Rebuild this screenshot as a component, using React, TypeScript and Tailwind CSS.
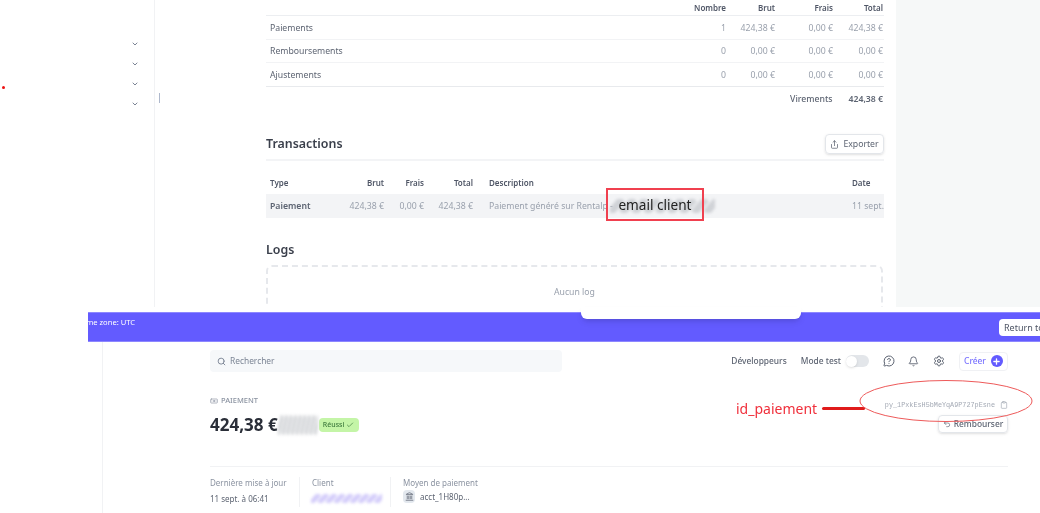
import { Banknote, Check, ChevronDown, Clipboard, Landmark, Plus, Search, Settings, Bell, MessageCircleQuestion, Undo2, Share } from "lucide-react"

const summary = [
  { label: "Paiements", count: "1", gross: "424,38 €", fees: "0,00 €", total: "424,38 €" },
  { label: "Remboursements", count: "0", gross: "0,00 €", fees: "0,00 €", total: "0,00 €" },
  { label: "Ajustements", count: "0", gross: "0,00 €", fees: "0,00 €", total: "0,00 €" },
]

function Smear({ color, width, height }: { color: string; width: number; height: number }) {
  return (
    <svg width={width} height={height} viewBox="0 0 70 10" preserveAspectRatio="none" className="blur-[1.5px]">
      {[0, 8, 16, 24, 32, 40, 48, 56, 64].map((x) => (
        <path key={x} d={`M${x} 10L${x + 8} 0`} stroke={color} strokeWidth="5" />
      ))}
    </svg>
  )
}

function TopStatement() {
  return (
    <div className="flex h-[307px] overflow-hidden bg-white">
      <div className="w-[155px] shrink-0 border-r border-[#f1f2f4] pt-[35px] pr-[15px] flex flex-col items-end gap-[1.5px] text-[#7b8494]">
        <ChevronDown size={8} className="my-[5.2px]" strokeWidth={3} />
        <ChevronDown size={8} className="my-[5.2px]" strokeWidth={3} />
        <ChevronDown size={8} className="my-[5.2px]" strokeWidth={3} />
        <ChevronDown size={8} className="my-[5.2px]" strokeWidth={3} />
      </div>
      <div className="flex-1 pl-[111px] pr-[12px] text-[8.7px]">
        <div className="grid grid-cols-[1fr_49px_58px_50px] h-[16px] items-center pl-1 pr-px border-b border-[#eceef1] font-semibold text-[#4f5666] text-right text-[8px]">
          <span>Nombre</span>
          <span>Brut</span>
          <span>Frais</span>
          <span>Total</span>
        </div>
        {summary.map((row) => (
          <div key={row.label} className="grid grid-cols-[1fr_49px_58px_50px] h-[23.5px] items-center pl-1 pr-px pt-[2px] border-b border-[#f2f3f5] text-[#9aa1ad] text-right">
            <div className="flex justify-between">
              <span className="text-[#5d6472]">{row.label}</span>
              <span>{row.count}</span>
            </div>
            <span>{row.gross}</span>
            <span>{row.fees}</span>
            <span>{row.total}</span>
          </div>
        ))}
        <div className="flex justify-end gap-[16px] h-[26px] items-center pr-px pt-[2px] border-t border-[#e8eaed] -mt-px font-semibold text-[#5d6472]">
          <span className="font-medium">Virements</span>
          <span>424,38 €</span>
        </div>
        <div className="flex items-center justify-between mt-[18px] h-[31.5px] border-b-2 border-[#f3f4f6]">
          <h2 className="text-[12.4px] font-semibold text-[#3a3f4b]">Transactions</h2>
          <button className="flex items-center gap-1 h-[20px] w-[59px] justify-center rounded border border-[#e3e6ea] shadow-sm text-[#5d6472]">
            <Share size={9} />
            Exporter
          </button>
        </div>
        <div className="grid grid-cols-[86px_28px_40px_49px_1fr_32px] h-[33px] items-end pb-[5px] pl-1 font-semibold text-[#4f5666] text-[8px]">
          <span>Type</span>
          <span className="text-right">Brut</span>
          <span className="text-right">Frais</span>
          <span className="text-right">Total</span>
          <span className="pl-[16px]">Description</span>
          <span>Date</span>
        </div>
        <div className="grid grid-cols-[86px_28px_40px_49px_1fr_32px] h-[24px] items-center pl-1 pt-[2px] bg-[#f3f4f6] text-[#9aa1ad] whitespace-nowrap overflow-hidden">
          <span className="font-semibold text-[#5d6472]">Paiement</span>
          <span className="flex justify-end">424,38 €</span>
          <span className="text-right">0,00 €</span>
          <span className="text-right">424,38 €</span>
          <span className="pl-[16px]">Paiement généré sur Rentalp -</span>
          <span>11 sept.</span>
        </div>
        <h2 className="mt-[23px] text-[12.4px] leading-[18px] font-semibold text-[#3a3f4b]">Logs</h2>
        <div className="mt-[6px] mr-px h-[70px] rounded-md border-2 border-dashed border-[#e6e8ec] pt-[19px] text-center text-[#9aa1ad]">
          Aucun log
        </div>
      </div>
      <div className="w-[144px] shrink-0 bg-[#f6f8f8]" />
    </div>
  )
}

function TopBar() {
  return (
    <div className="ml-[88px] mt-[5px] h-[30px] overflow-hidden bg-[#635bff] border-y border-[#8d87ff] flex justify-between pt-[4px]">
      <span className="-ml-[8px] text-[7.6px] leading-[11px] text-white whitespace-nowrap">Time zone: UTC</span>
      <button className="mt-[2px] -mr-[30px] h-[17px] w-[71px] rounded-sm bg-white pl-[5px] text-left text-[9px] text-[#4f5666] whitespace-nowrap">
        Return to
      </button>
    </div>
  )
}

function PaymentHeader() {
  return (
    <div className="ml-[88px] flex h-[171px] overflow-hidden">
      <div className="w-[15px] shrink-0 border-r border-[#f1f2f4]" />
      <div className="flex-1 pl-[107px] pr-[32px] pt-[8px] text-[#5d6472]">
        <div className="flex items-center justify-between h-[22px]">
          <div className="flex items-center gap-[4px] w-[352px] h-[22px] rounded bg-[#f6f8fa] pl-[7px] text-[8.4px] text-[#7b8494]">
            <Search size={9} strokeWidth={2.5} />
            Rechercher
          </div>
          <div className="flex items-center text-[8.4px] font-medium">
            <span>Développeurs</span>
            <span className="ml-[14px]">Mode test</span>
            <span className="ml-[5px] flex h-[12px] w-[23px] items-center rounded-full bg-[#e3e6ea]">
              <span className="h-[11px] w-[11px] rounded-full bg-white shadow-sm" />
            </span>
            <MessageCircleQuestion size={12} className="ml-[14px]" />
            <Bell size={11} className="ml-[13px]" />
            <Settings size={12} className="ml-[14px]" />
            <span className="ml-[14px] flex h-[19px] w-[49px] items-center justify-center gap-[5px] rounded border border-[#f0f1f4] text-[#7a73ff]">
              Créer
              <span className="flex h-[12px] w-[12px] items-center justify-center rounded-full bg-[#635bff] text-white">
                <Plus size={9} strokeWidth={3.5} />
              </span>
            </span>
          </div>
        </div>
        <div className="mt-[23px] flex justify-between">
          <div>
            <div className="flex items-center gap-[3px] h-[12px] text-[7.5px] font-medium text-[#8b93a1]">
              <Banknote size={8} />
              PAIEMENT
            </div>
            <div className="mt-[5px] flex items-center h-[26px]">
              <span className="text-[17px] font-bold text-[#2a2e38]">424,38 €</span>
              <Smear color="#d5d7da" width={40} height={20} />
              <span className="ml-[1px] flex h-[14px] w-[40px] items-center justify-center gap-[2px] rounded-sm bg-[#c4f5a7] text-[7px] font-medium text-[#3d7a3d]">
                Réussi
                <Check size={8} />
              </span>
            </div>
          </div>
          <div className="flex flex-col items-end">
            <div className="flex items-center gap-[5px] h-[12px] mt-[4px] text-[#a3a9b4]">
              <span className="font-['Liberation_Mono',monospace] text-[6.8px]">py_1PxkEsH5bMeYqA9P727pEsne</span>
              <Clipboard size={8} />
            </div>
            <button className="mt-[4px] flex h-[18px] w-[70px] items-center justify-center gap-[3px] rounded border border-[#e3e6ea] shadow-sm text-[8.4px] font-medium">
              <Undo2 size={8} />
              Rembourser
            </button>
          </div>
        </div>
        <div className="mt-[28px] flex border-t border-[#f1f2f4] pt-[10px] text-[8px] text-[#8b93a1]">
          <div className="w-[90px] h-[30px] border-r border-[#f1f2f4]">
            <div className="leading-[12px]">Dernière mise à jour</div>
            <div className="mt-[4px] leading-[12px] text-[#5d6472]">11 sept. à 06:41</div>
          </div>
          <div className="w-[91px] h-[30px] border-r border-[#f1f2f4] pl-[12px]">
            <div className="leading-[12px]">Client</div>
            <div className="-ml-px mt-[5px]">
              <Smear color="#d3ccfa" width={71} height={9} />
            </div>
          </div>
          <div className="pl-[12px]">
            <div className="leading-[12px]">Moyen de paiement</div>
            <div className="mt-[1px] flex items-center gap-[5px] text-[#5d6472]">
              <span className="flex h-[13px] w-[12px] items-center justify-center rounded-sm bg-[#e3e8ee]">
                <Landmark size={9} />
              </span>
              acct_1H80p...
            </div>
          </div>
        </div>
      </div>
    </div>
  )
}

export default function App() {
  return (
    <div className="relative h-[513px] w-[1040px] overflow-hidden bg-white blur-[0.5px] font-['Noto_Sans',sans-serif]">
      <TopStatement />
      <TopBar />
      <PaymentHeader />

      {/* annotations and things sitting over both captures */}
      <div className="absolute left-[581px] top-[307px] h-[12px] w-[220px] rounded-b-md bg-white shadow-md" />
      <div className="absolute left-[2px] top-[86px] h-[3px] w-[3px] rounded-full bg-[#ee1111]" />
      <div className="absolute left-[159px] top-[93px] h-[10px] w-px bg-[#aeb8cc]" />
      <div className="absolute left-[610px] top-[199px] opacity-60">
        <Smear color="#b9bcc2" width={105} height={14} />
      </div>
      <div className="absolute left-[606px] top-[188px] flex h-[33px] w-[98px] items-center justify-center border-2 border-[#f0404f] pt-[2px] text-[13.6px] text-[#222]">
        email client
      </div>
      <span className="absolute left-[736px] top-[399px] text-[14px] leading-[20px] text-[#f0303c]">id_paiement</span>
      <div className="absolute left-[822px] top-[407px] h-[3px] w-[43px] rounded-full bg-[#e01b1b]" />
      <svg className="absolute left-[855px] top-[376px]" width="182" height="50" viewBox="0 0 182 50" fill="none">
        <ellipse cx="91" cy="25" rx="86" ry="20.5" stroke="#ee5a5a" strokeWidth="1" />
      </svg>
    </div>
  )
}
